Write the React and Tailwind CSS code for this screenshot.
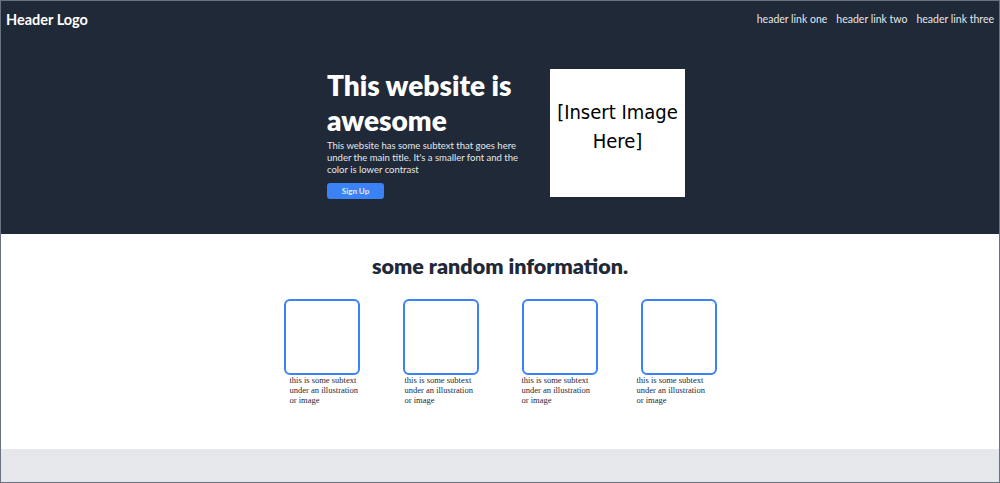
import React from 'react';

const cards = [
  { id: 1, shift: 'ml-[6px]' },
  { id: 2, shift: 'ml-[2px]' },
  { id: 3, shift: 'ml-0' },
  { id: 4, shift: '-ml-[4px]' },
];

const links = ['header link one', 'header link two', 'header link three'];

const App = () => {
  return (
    <div className="h-[483px] overflow-hidden border border-gray-500 font-['Lato',sans-serif]">
      <div className="bg-[#1f2937] h-[233px]">
        <nav className="flex items-center justify-between pl-[5px] pr-[5px] pt-[8px]">
          <div className="text-white text-[14.5px] font-bold">Header Logo</div>
          <ul className="flex gap-[9px] text-[10.5px] text-[#e5e7eb]">
            {links.map((l) => (
              <li key={l}>{l}</li>
            ))}
          </ul>
        </nav>
        <div className="flex justify-center gap-[9px] mt-[37px] pl-[12px]">
          <div className="w-[214px]">
            <h1 className="text-white text-[28px] font-extrabold leading-[35px]">
              This website is awesome
            </h1>
            <p className="text-[#e5e7eb] text-[9.5px] leading-[12px] mt-[2px]">
              This website has some subtext that goes here under the main title. It's a smaller font and the color is lower contrast
            </p>
            <button className="mt-[1px] bg-[#3b82f6] text-[#e5e7eb] text-[8px] font-bold rounded-[3px] w-[57px] h-[16px]">
              Sign Up
            </button>
          </div>
          <div className="w-[135px] h-[128px] mt-[1px] pb-[12px] bg-white flex items-center justify-center text-center text-[20px] leading-[29px] text-black font-['DejaVu_Sans_Condensed','DejaVu_Sans',sans-serif]">
            [Insert Image Here]
          </div>
        </div>
      </div>
      <div className="bg-white h-[215px] pt-[16px]">
        <h2 className="text-center text-[21.5px] font-extrabold text-[#1f2937]">some random information.</h2>
        <div className="flex justify-center gap-[43px] mt-[17px]">
          {cards.map((c) => (
            <div key={c.id} className="w-[76px]">
              <div className="w-[76px] h-[76px] border-2 border-[#3b82f6] rounded-[6px]"></div>
              <p className={`${c.shift} w-[72px] text-[8.5px] leading-[10px] text-[#1f2937] font-['Liberation_Serif',serif]`}>
                this is some subtext under an illustration or image
              </p>
            </div>
          ))}
        </div>
      </div>
      <div className="bg-[#e5e7eb] h-[40px]"></div>
    </div>
  );
};

export default App;
